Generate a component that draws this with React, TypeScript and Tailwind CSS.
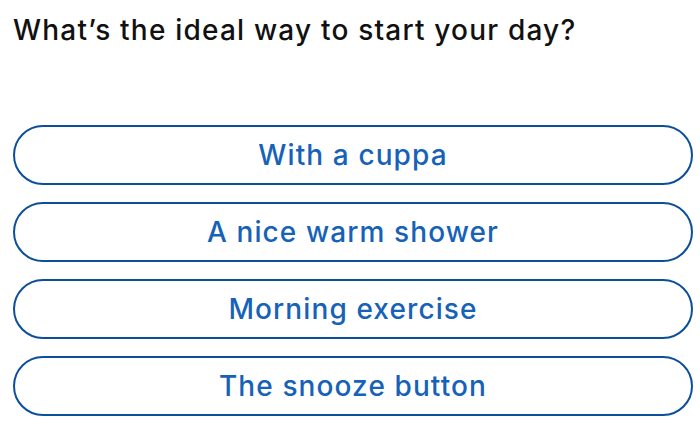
const options = [
  'With a cuppa',
  'A nice warm shower',
  'Morning exercise',
  'The snooze button',
];

export default function App() {
  return (
    <div className="w-[700px] h-[431px] bg-white font-['Inter',sans-serif] overflow-hidden">
      {/* Question */}
      <h1 className="pl-[13px] pt-[11px] text-[28px] leading-[38px] font-medium text-[#111111] tracking-[1.2px]">
        What’s the ideal way to start your day?
      </h1>

      {/* Answers */}
      <div className="mt-[76px] ml-[13px] w-[680px] flex flex-col gap-[17px]">
        {options.map((option) => (
          <button
            key={option}
            className="h-[60px] w-full rounded-full border-2 border-[#0b4f9c] bg-white text-[28px] font-medium tracking-[1.1px] text-[#1662b8]"
          >
            {option}
          </button>
        ))}
      </div>
    </div>
  );
}
